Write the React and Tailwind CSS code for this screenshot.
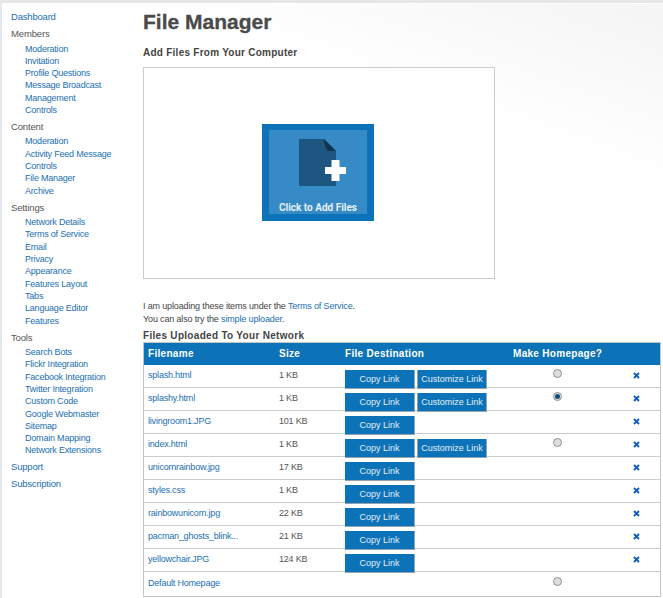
import React from "react";

const Link = ({ children, className = "" }) => (
  <a className={`text-[#1a6fb5] ${className}`}>{children}</a>
);

const nav = [
  { head: "Dashboard", link: true, mt: "mt-[8px]" },
  { head: "Members", mt: "mt-[5px]", items: ["Moderation", "Invitation", "Profile Questions", "Message Broadcast", "Management", "Controls"] },
  { head: "Content", mt: "mt-[5px]", items: ["Moderation", "Activity Feed Message", "Controls", "File Manager", "Archive"] },
  { head: "Settings", mt: "mt-[5px]", items: ["Network Details", "Terms of Service", "Email", "Privacy", "Appearance", "Features Layout", "Tabs", "Language Editor", "Features"] },
  { head: "Tools", mt: "mt-[5px]", items: ["Search Bots", "Flickr Integration", "Facebook Integration", "Twitter Integration", "Custom Code", "Google Webmaster", "Sitemap", "Domain Mapping", "Network Extensions"] },
  { head: "Support", link: true, mt: "mt-[5px]" },
  { head: "Subscription", link: true, mt: "mt-[5px]" },
];

const files = [
  { name: "splash.html", size: "1 KB", custom: true, radio: "off" },
  { name: "splashy.html", size: "1 KB", custom: true, radio: "on" },
  { name: "livingroom1.JPG", size: "101 KB" },
  { name: "index.html", size: "1 KB", custom: true, radio: "off" },
  { name: "unicornrainbow.jpg", size: "17 KB" },
  { name: "styles.css", size: "1 KB" },
  { name: "rainbowunicorn.jpg", size: "22 KB" },
  { name: "pacman_ghosts_blink...", size: "21 KB" },
  { name: "yellowchair.JPG", size: "124 KB" },
];

const Btn = ({ children, left }) => (
  <span className={`w-[70px] h-[19px] bg-[#0c73b8] border-r border-b border-[#93a3b0] ${left ? "border-l" : ""} text-[#e3eef6] text-[9px] flex items-center justify-center whitespace-nowrap`}>
    {children}
  </span>
);

const Radio = ({ on }) => (
  <span className="w-[9px] h-[9px] rounded-full border border-[#8f8f8f] bg-[#dedede] flex items-center justify-center">
    {on && <span className="w-[5px] h-[5px] rounded-full bg-[#0b4f7d]" />}
  </span>
);

const X = () => (
  <svg width="7" height="7" viewBox="0 0 7 7" className="block">
    <path d="M1 1 L6 6 M6 1 L1 6" stroke="#0f5fc0" strokeWidth="1.9" />
  </svg>
);

const Row = ({ f }) => (
  <div className="flex h-[23px] border-b border-[#cccccc] text-[9px] leading-[12px]">
    <div className="w-[135px] pl-[4px] pt-[4px] tracking-[-0.2px]"><Link>{f.name}</Link></div>
    <div className="w-[66px] pt-[4px] text-[#555555] tracking-[-0.2px]">{f.size}</div>
    <div className="w-[173px] flex gap-[2px] pt-[5px] h-fit relative">
      <Btn>Copy Link</Btn>
      {f.custom && <Btn left>Customize Link</Btn>}
    </div>
    <div className="w-[79px] pt-[4px] flex justify-center h-fit">{f.radio && <Radio on={f.radio === "on"} />}</div>
    <div className="flex-1 pt-[7px] pl-[15px] flex justify-center h-fit"><X /></div>
  </div>
);

export default function App() {
  return (
    <div
      className="flex w-[663px] h-[598px] overflow-hidden text-[9px] text-[#555555] border-t-[3px] border-l-2 border-t-[#e6e6e6] border-l-[#e3e8ef] bg-[linear-gradient(180deg,#ffffff_0,#ffffff_1px,transparent_1px),linear-gradient(200deg,#f4f4f4_0,#ffffff_170px)]"
      style={{ fontFamily: '"Liberation Sans", Arial, sans-serif' }}
    >
      <nav className="w-[141px] shrink-0 pl-[9px]">
        {nav.map((n) => (
          <div key={n.head} className={n.mt}>
            {n.link ? (
              <Link className="block text-[9.5px] leading-[12px] tracking-[-0.2px]">{n.head}</Link>
            ) : (
              <div className="text-[9.5px] leading-[12px] text-[#555555] tracking-[-0.15px]">{n.head}</div>
            )}
            {n.items && (
              <ul className="pl-[14px] mt-[2.5px] mb-[-0.3px] text-[9px] tracking-[-0.2px]">
                {n.items.map((i) => (
                  <li key={i} className="h-[12.3px] leading-[12.3px]"><Link>{i}</Link></li>
                ))}
              </ul>
            )}
          </div>
        ))}
      </nav>
      <main className="flex-1 min-w-0">
        <h1 className="text-[21px] leading-[24px] font-bold text-[#4a4a4a] mt-[7px] [-webkit-text-stroke:0.3px_#4a4a4a]">File Manager</h1>
        <h2 className="text-[10px] leading-[12px] font-bold tracking-[0.25px] text-[#444444] mt-[13px]">Add Files From Your Computer</h2>
        <div className="w-[352px] h-[212px] border border-[#cccccc] bg-white mt-[8px] flex items-center justify-center">
          <div className="w-[112px] h-[97px] bg-[#0c73b8] pt-[6px] px-[7px] pb-[7px] ml-[-2px] mt-[-1px]">
            <div className="w-full h-full bg-[#368bc6] flex flex-col items-center relative">
              <svg width="48" height="52" viewBox="0 0 48 52" className="ml-[-1px] mt-[9px] self-start translate-x-[31px]">
                <path d="M0 0 H25 L37 12 V47 H0 Z" fill="#1d5680" />
                <path d="M25 0 L37 12 H29 Q25 8 25 0 Z" fill="#12334d" />
                <path d="M32.5 21 H40.5 V28 H47 V35 H40.5 V42 H32.5 V35 H26 V28 H32.5 Z" fill="#ffffff" />
              </svg>
              <span className="absolute left-0 right-0 bottom-0 text-center text-[10px] font-bold text-[#e6f0f8] leading-[12px]" style={{ fontFamily: "Roboto, sans-serif" }}>Click to Add Files</span>
            </div>
          </div>
        </div>
        <p className="mt-[21px] leading-[12px] text-[9px] text-[#444444] tracking-[-0.15px]">I am uploading these items under the <Link>Terms of Service</Link>.</p>
        <p className="mt-[1px] leading-[12px] text-[9px] text-[#444444] tracking-[-0.15px]">You can also try the <Link>simple uploader</Link>.</p>
        <h3 className="mt-[5px] text-[10px] leading-[12px] font-bold tracking-[0.3px] text-[#444444]">Files Uploaded To Your Network</h3>
        <div className="w-[518px] border border-[#c4c4c4]">
          <div className="flex h-[22px] bg-[#0c73b8] text-white font-bold tracking-[0.3px] text-[10px] leading-[21px]">
            <div className="w-[135px] pl-[4px]">Filename</div>
            <div className="w-[66px]">Size</div>
            <div className="w-[168px]">File Destination</div>
            <div>Make Homepage?</div>
          </div>
          {files.map((f) => <Row key={f.name} f={f} />)}
          <div className="flex h-[24px] text-[9px] leading-[12px]">
            <div className="w-[374px] pl-[4px] pt-[5px] tracking-[-0.2px]"><Link>Default Homepage</Link></div>
            <div className="w-[79px] pt-[5px] flex justify-center h-fit"><Radio /></div>
          </div>
        </div>
      </main>
    </div>
  );
}
